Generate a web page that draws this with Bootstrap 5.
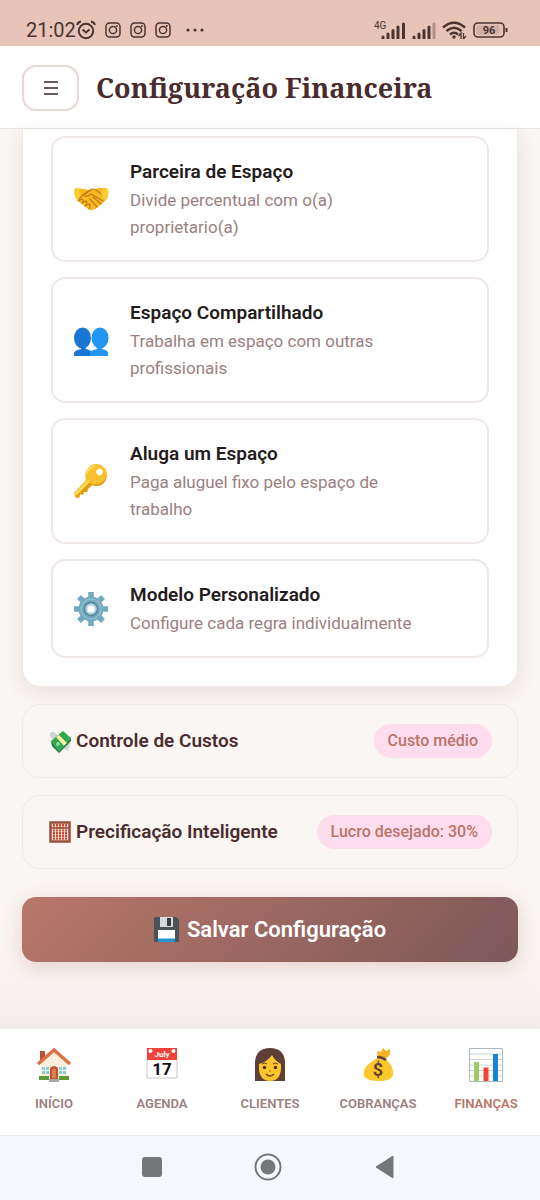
<!DOCTYPE html>
<html lang="pt-BR">
<head>
<meta charset="utf-8">
<meta name="viewport" content="width=device-width, initial-scale=1">
<title>Configuração Financeira</title>
<link rel="stylesheet" href="https://cdn.jsdelivr.net/npm/bootstrap@5.3.0/dist/css/bootstrap.min.css">
<script src="https://cdn.jsdelivr.net/npm/bootstrap@5.3.0/dist/js/bootstrap.bundle.min.js"></script>
<style>
  :root { --ink: #4a2c2e; --soft: #9a8080; --rose: #b87568; --line: #ece4e0; }
  body { font-family: Roboto, sans-serif; background: #faf6f3; color: var(--ink); }
  svg { display: block; flex: none; }
  .status-bar { background: #e8c4b8; height: 46px; padding: 14px 32px 0 26px; color: #4b3431; }
  .clock { font-size: 20px; line-height: 32px; }
  .notices { gap: 9px; }
  .signals { gap: 6px; }
  .app-header { padding: 19px 22px 17px; gap: 17px; border-bottom: 1px solid var(--line); }
  .menu-btn { width: 57px; height: 46px; border: 2px solid #e8d8d3; border-radius: 14px; color: #3a2224; }
  .page-title { font: bold 27px/36px "Noto Serif", "DejaVu Serif Condensed", "DejaVu Serif", serif; }
  .page-main { padding: 0 22px 66px; background: linear-gradient(#faf6f3 90%, #f8f3f1 96%, #f2ebe9); }
  .panel { padding: 7px 28px 28px; gap: 15px; border: 1px solid #efe8e5; border-top: 0; border-radius: 0 0 18px 18px; box-shadow: 0 5px 20px rgba(74,44,46,.1); }
  .option { padding: 19px 64px 19px 20px; gap: 21px; border: 2px solid #f0e8e4; border-radius: 14px; color: #241b1b; }
  .option-title { font-size: 19px; line-height: 30px; font-weight: 600; }
  .option-text { font-size: 17px; line-height: 27px; color: var(--soft); }
  .section-row { height: 74px; margin-top: 17px; padding: 0 25px 0 26px; border: 1px solid #f1eae7; border-radius: 18px; color: var(--ink); font-size: 19px; font-weight: 600; }
  .tag { background: #ffdcee; color: var(--rose); font-size: 16px; line-height: 34px; font-weight: 500; padding: 0 14px; }
  .save-btn { height: 65px; margin-top: 28px; border: 0; border-radius: 14px; font-size: 22px; font-weight: 600; color: #fff; background: linear-gradient(135deg, #b87769, #7d5859); box-shadow: 0 5px 20px rgba(183,110,99,.27); }
  .tab-nav { border-top: 1px solid #f3edeb; padding: 18px 0 21px; }
  .tab-nav a { font-size: 13px; line-height: 20px; font-weight: 600; color: var(--soft); gap: 11px; min-width: 0; }
  .tab-nav a.active { color: var(--rose); }
  .system-nav { background: #f7f8fe; border-top: 1px solid #e9e9ef; height: 65px; padding: 0 4px 2px 0; color: #757779; }
  .system-nav button { color: inherit; margin: 0 43px; }
</style>
</head>
<body>
<svg width="0" height="0" class="position-absolute" aria-hidden="true">
  <symbol id="insta" viewBox="0 0 16 16"><g fill="none" stroke="currentColor" stroke-width="1.5"><rect x="1" y="1" width="14" height="14" rx="3.5"/><circle cx="8" cy="8" r="3.6"/></g><circle cx="11.9" cy="4" r="1"/></symbol>
</svg>
<div class="d-flex flex-column min-vh-100">
  <div class="status-bar d-flex align-items-center justify-content-between">
    <div class="d-flex align-items-center">
      <span class="clock">21:02</span>
      <div class="notices d-flex align-items-center">
        <svg width="20" height="20" viewBox="0 0 20 20" fill="none" stroke="currentColor" stroke-width="2"><circle cx="10" cy="11" r="7.2"/><path d="M1 5Q2 2 5 1.5M19 5Q18 2 15 1.5M6.5 9.5L10 12.5 13.5 9.5"/></svg>
        <svg width="16" height="16" fill="currentColor"><use href="#insta"/></svg>
        <svg width="16" height="16" fill="currentColor"><use href="#insta"/></svg>
        <svg width="16" height="16" fill="currentColor"><use href="#insta"/></svg>
        <svg class="ms-1" width="20" height="4" fill="currentColor"><circle cx="4" cy="2" r="1.6"/><circle cx="11" cy="2" r="1.6"/><circle cx="18" cy="2" r="1.6"/></svg>
      </div>
    </div>
    <div class="signals d-flex align-items-center">
      <svg width="32" height="18" viewBox="0 0 32 18"><text x="0" y="8" font-size="10" fill="currentColor">4G</text><path d="M9 17v-1M14 17v-4M19 17V9.500M24 17V6M29.500 17V3" stroke="currentColor" stroke-width="3" stroke-linecap="round"/></svg>
      <svg width="24" height="18" viewBox="0 0 24 18" stroke="currentColor" stroke-width="3" stroke-linecap="round"><path d="M2 17v-1M7 17v-4M12 17V9.500M17 17V6"/><path d="M22 17V3" opacity=".35"/></svg>
      <svg width="25" height="18" viewBox="0 0 25 18" fill="none" stroke="currentColor" stroke-width="2.600"><path d="M1 6.500Q12 -3 23 6.500M4.500 10Q12 3.500 19.500 10M8 13.500Q12 10 16 13.500"/><circle cx="12" cy="16" r="1" fill="currentColor" stroke-width="1.500"/><path d="M16.500 15L19 12v6M21.500 12v6L24 15" stroke-width="1.300"/></svg>
      <svg width="35" height="18" viewBox="0 0 35 18"><rect x="1" y="2" width="30" height="14" rx="4" fill="none" stroke="currentColor" stroke-width="1.600"/><rect x="3.500" y="4.500" width="23" height="9" rx="1" fill="#cfaea6"/><path d="M33.500 7v4" stroke="currentColor" stroke-width="2"/><text x="16" y="13" font-size="11" font-weight="700" fill="currentColor" text-anchor="middle">96</text></svg>
    </div>
  </div>

  <header class="app-header bg-white d-flex align-items-center">
    <button class="menu-btn btn bg-white p-0 d-flex align-items-center justify-content-center" type="button" aria-label="Menu">
      <svg width="14" height="14" viewBox="0 0 14 14" stroke="currentColor" stroke-width="1.700"><path d="M0 1h14M0 7h14M0 13h14"/></svg>
    </button>
    <h1 class="page-title mb-0">Configuração Financeira</h1>
  </header>

  <main class="page-main flex-grow-1">
    <section class="panel bg-white d-grid">
      <button type="button" class="option btn bg-white text-start d-flex align-items-center">
        <svg width="36" height="36" viewBox="0 0 36 36"><path d="M2 7L10 8 18 9 26 7 34 7Q37 13 33 19L25 26Q20 31 15 28L5 20Q0 14 2 7z" fill="#f6b922"/><path d="M2 7Q0 14 5 20L8 18 6 8zM34 7Q37 13 33 19L30 18 29 8z" fill="#fdcc35"/><g fill="none" stroke="#c47a17" stroke-width="1.200" stroke-linecap="round"><path d="M6 18L11 13 19 8Q23 8 27 12M19 8L11 14Q13 17 18 13L30 20M20 16L28 23M17 18L24 26M5 20L9 18Q11 19 9 22M9 22L13 20Q15 22 12 25M12 25L16 23Q18 25 16 28"/></g></svg>
        <span><span class="option-title d-block">Parceira de Espaço</span><span class="option-text d-block">Divide percentual com o(a) proprietario(a)</span></span>
      </button>
      <button type="button" class="option btn bg-white text-start d-flex align-items-center">
        <svg width="36" height="36" viewBox="0 -2 36 36"><path d="M1 32v-3q1-3 7-4l2-3h1l2 3q5 1 7 4v3z" fill="#1976d2"/><ellipse cx="9.500" cy="14" rx="8.500" ry="10.500" fill="#1976d2"/><path d="M17 32v-3q1-3 7-4l1-3h2l2 3q6 1 6 4v3z" fill="#2196f3"/><ellipse cx="27" cy="14" rx="8.500" ry="10.500" fill="#2196f3"/></svg>
        <span><span class="option-title d-block">Espaço Compartilhado</span><span class="option-text d-block">Trabalha em espaço com outras profissionais</span></span>
      </button>
      <button type="button" class="option btn bg-white text-start d-flex align-items-center">
        <svg width="36" height="36" viewBox="0 0 36 36"><path fill-rule="evenodd" d="M15 5Q20-1 28 2 35 6 34 14 31 24 22 23L19 22 15 26 14 29 11 29 10 32 7 31 6 35 2 34 1 30 13 17Q11 10 15 5zM24 7a3.200 3.200 0 1 0 5 4 3.200 3.200 0 0 0-5-4z" fill="#fbc02d"/><path d="M34 12Q32 24 22 23L19 22 15 26 14 29 11 29 10 32 7 31 6 35 2 34 16 20Q29 25 34 12z" fill="#dc9e16"/><path d="M3 31L16 18M14 10Q16 4 22 3" stroke="#ffe05a" stroke-width="2" fill="none"/></svg>
        <span><span class="option-title d-block">Aluga um Espaço</span><span class="option-text d-block">Paga aluguel fixo pelo espaço de trabalho</span></span>
      </button>
      <button type="button" class="option btn bg-white text-start d-flex align-items-center">
        <svg width="36" height="36" viewBox="0 0 36 36"><g stroke="#72a9bd" stroke-width="5.500"><path d="M18 1v34M1 18h34M6 6l24 24M30 6L6 30"/></g><circle cx="18" cy="18" r="12.500" fill="#72a9bd"/><circle cx="18" cy="18" r="10" fill="none" stroke="#8cbdce" stroke-width="1.500"/><circle cx="18" cy="18" r="6.500" fill="#b3d4de" stroke="#4f879e" stroke-width="1.500"/><circle cx="18" cy="18" r="3.500" fill="#fff"/></svg>
        <span><span class="option-title d-block">Modelo Personalizado</span><span class="option-text d-block">Configure cada regra individualmente</span></span>
      </button>
    </section>

    <button type="button" class="section-row btn w-100 d-flex align-items-center justify-content-between">
      <span class="d-flex align-items-center gap-1">
        <svg width="23" height="23" viewBox="0 0 23 23"><path d="M1 3Q5 0 9 6L5 9Q1 9 1 3zM15 14l7-1-2 3 2 1-3 1 1 3-5-2z" fill="#cfd1d3"/><path d="M2 11L14 1 22 8 10 21z" fill="#2fa84f"/><path d="M2 11L10 21 10 23 3 16zM22 8L10 21v2L22 11z" fill="#177d37"/><path d="M7 7L10 5 18 13 15 16z" fill="#f5eea0"/><circle cx="9" cy="14" r="2" fill="#8ed79e"/></svg>
        <span>Controle de Custos</span>
      </span>
      <span class="tag rounded-pill">Custo médio</span>
    </button>
    <button type="button" class="section-row btn w-100 d-flex align-items-center justify-content-between">
      <span class="d-flex align-items-center gap-1">
        <svg width="23" height="23" viewBox="0 0 23 23"><rect x="1.500" y="1.500" width="19" height="19" fill="#f8e4dc" stroke="#9c4f3b" stroke-width="2.500"/><path d="M5 3v16M8 3v16M11 3v16M14 3v16M17 3v16" stroke="#cf4631" stroke-width="2" stroke-dasharray="2.200 .500"/><path d="M2 7h18" stroke="#9c4f3b" stroke-width="1.500"/></svg>
        <span>Precificação Inteligente</span>
      </span>
      <span class="tag rounded-pill">Lucro desejado: 30%</span>
    </button>

    <button type="button" class="save-btn btn w-100 d-flex align-items-center justify-content-center gap-2">
      <svg width="25" height="25" viewBox="0 0 25 25"><path d="M1 0h21l3 3v22H1L0 24V1z" fill="#4b5359"/><path d="M6 0h13v10H6z" fill="#d7d9da"/><path d="M13 1h4v8h-4z" fill="#394044"/><path d="M4 13h17v12H4z" fill="#fff"/><path d="M4 21.500h17V25H4z" fill="#2196d3"/></svg>
      <span>Salvar Configuração</span>
    </button>
  </main>

  <nav class="tab-nav bg-white row row-cols-5 g-0 text-center">
    <a href="#" class="col text-decoration-none d-flex flex-column align-items-center">
      <svg width="36" height="36" viewBox="0 0 36 36"><path d="M4 4h5v11H4z" fill="#b55337"/><path d="M5 16L18 4 31 16V33H5z" fill="#f9efdc"/><path d="M2 17L18 3 34 17" fill="none" stroke="#dc7048" stroke-width="3.500"/><path d="M6 20h7v7H6zM23 20h7v7h-7z" fill="#8acdd2"/><path d="M9.500 20v7M6 23.500h7M26.500 20v7M23 23.500h7" stroke="#fff"/><path d="M14 33V21q4-4 8 0v12z" fill="#bb5434"/><path d="M16 31v-9h4v9z" fill="#df8054"/><path d="M3 29h10v4H3zM23 29h10v4H23z" fill="#5f9a38"/><path d="M13 32h10v3H13z" fill="#a7a7ad"/></svg>
      INÍCIO</a>
    <a href="#" class="col text-decoration-none d-flex flex-column align-items-center">
      <svg width="36" height="36" viewBox="0 0 36 36"><path d="M3 12h30v19H3z" fill="#fff" stroke="#c4c8ca"/><path d="M3 1h30v12H3z" fill="#f0443a"/><circle cx="6.500" cy="4" r="2" fill="#fff"/><circle cx="29.500" cy="4" r="2" fill="#fff"/><text x="18" y="10" font-size="8" font-weight="700" fill="#fff" text-anchor="middle">July</text><text x="18" y="28" font-size="17" font-weight="700" fill="#111" text-anchor="middle">17</text></svg>
      AGENDA</a>
    <a href="#" class="col text-decoration-none d-flex flex-column align-items-center">
      <svg width="36" height="36" viewBox="0 0 36 36"><path d="M3 34V15Q4 1 18 1T33 15V34z" fill="#5e4037"/><path d="M7 17Q15 15 20 8 23 14 29 17V22Q28 34 18 34T7 22z" fill="#fcc52c"/><path d="M10 17q2-2 5 0M21 17q3-2 5 0" stroke="#654136" fill="none"/><circle cx="12.500" cy="20.500" r="1.700" fill="#4a332c"/><circle cx="23.500" cy="20.500" r="1.700" fill="#4a332c"/><path d="M17 24h2" stroke="#dd8b18" stroke-width="1.500"/><path d="M14 27q4 4 8 0" fill="none" stroke="#84442c" stroke-width="1.500"/></svg>
      CLIENTES</a>
    <a href="#" class="col text-decoration-none d-flex flex-column align-items-center">
      <svg width="36" height="36" viewBox="0 0 36 36"><path d="M18 10L17 4 21 5 23 1 26 4 30 2 30 7 27 11z" fill="#f3b31e"/><path d="M17 11L26 12Q34 20 33 28 31 34 19 34T4 29Q2 22 10 16z" fill="#fcc72b"/><path d="M17 10q5 0 9 3" stroke="#674436" stroke-width="2.500" fill="none"/><text x="18" y="29" font-size="18" font-weight="700" fill="#674436" text-anchor="middle">$</text></svg>
      COBRANÇAS</a>
    <a href="#" class="col text-decoration-none d-flex flex-column align-items-center active" aria-current="page">
      <svg width="36" height="36" viewBox="0 0 36 36"><path d="M1.500 1.500h33v33h-33z" fill="#fff" stroke="#aeb9bf"/><path d="M2 7h32M2 12.500h32M2 18h32M2 23.500h32M2 29h32" stroke="#ccd4d8"/><path d="M6 15h5v19H6z" fill="#9ccc65"/><path d="M15.500 20.500h5V34h-5z" fill="#f44336"/><path d="M25 7h5v27h-5z" fill="#1583d6"/></svg>
      FINANÇAS</a>
  </nav>
  <nav class="system-nav d-flex align-items-center justify-content-center" aria-label="Sistema">
    <button type="button" class="btn border-0 p-0" aria-label="Recentes"><svg width="30" height="30"><rect x="5" y="5" width="20" height="20" rx="3" fill="currentColor"/></svg></button>
    <button type="button" class="btn border-0 p-0" aria-label="Início"><svg width="30" height="30"><circle cx="15" cy="15" r="12.500" fill="none" stroke="currentColor" stroke-width="2"/><circle cx="15" cy="15" r="7.500" fill="currentColor"/></svg></button>
    <button type="button" class="btn border-0 p-0" aria-label="Voltar"><svg width="30" height="30"><path d="M24 4v22L7 15z" fill="currentColor" stroke="currentColor" stroke-linejoin="round"/></svg></button>
  </nav>
</div>
</body>
</html>
